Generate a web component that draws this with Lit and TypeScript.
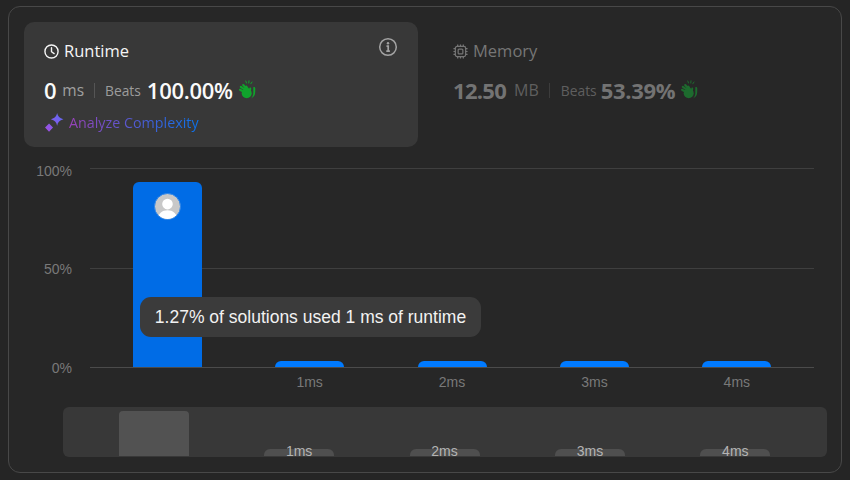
import { LitElement, html, css } from "lit";
import { customElement } from "lit/decorators.js";

const clap = html`<svg class="clap" viewBox="0 0 20 20" fill="none" stroke="currentColor" stroke-linecap="round">
  <path d="M10 13.500 3 9.800M10.500 11.500 3.800 6.800M11 10.500 6.200 5M11.500 10 9.300 6.600" stroke-width="2.100"/>
  <path d="M12.800 12.500 13.200 8.500" stroke-width="2"/>
  <circle cx="9.700" cy="13.300" r="5" fill="currentColor" stroke="none"/>
  <path fill="currentColor" stroke="none" d="M16.300 7.200c1.200-.7 2 .1 2 1.300l-.1 3.800c0 2.900-1.500 5-4.200 6.100 1.600-1.500 2.400-3.400 2.300-5.600Z"/>
  <path d="M8.800 1 9.500 3M12 .8 11.800 3M15 2 13.800 3.800" stroke-width="1"/>
</svg>`;

@customElement("app-root")
export class AppRoot extends LitElement {
  static styles = css`
    :host { display: block; width: 850px; height: 480px; box-sizing: border-box; padding: 6px 8px 7px; background: #252525; font-family: "Open Sans", "Liberation Sans", sans-serif; overflow: hidden; }
    * { box-sizing: border-box; }
    .frame { height: 467px; border: 1px solid #484848; border-radius: 12px; background: #272727; padding: 15px 14px 0 15px; }
    .top { display: flex; height: 125px; gap: 35px; }
    .stat { width: 394px; height: 125px; border-radius: 10px; padding: 17px 20px 0; position: relative; }
    .active { background: #383838; }
    .head { display: flex; align-items: center; gap: 5px; font-size: 16.500px; line-height: 24px; color: #f5f5f5; }
    .clock { width: 15px; height: 15px; }
    .info { position: absolute; top: 15px; right: 20px; width: 20px; height: 20px; color: #a3a3a3; }
    .vals { display: flex; align-items: center; margin-top: 11px; height: 32px; }
    .big { font-size: 22px; font-weight: 600; letter-spacing: -0.300px; color: #fafafa; }
    .big.tight { letter-spacing: -0.700px; }
    .unit { font-size: 15.500px; color: #a0a0a0; margin-left: 6px; }
    .sep { width: 1px; height: 15px; background: #555; margin: 0 10px; }
    .beats { font-size: 13.800px; color: #9c9c9c; margin-right: 6px; }
    .clap { width: 20px; height: 20px; color: #10a32c; margin-left: 4px; }
    .analyze { display: flex; align-items: center; gap: 4px; margin-top: 6px; margin-left: 0; }
    .spark { width: 21px; height: 21px; }
    .grad { font-size: 14.300px; line-height: 20px; background: linear-gradient(90deg, #9a42b8, #0a72ea); -webkit-background-clip: text; background-clip: text; color: transparent; }
    .dim { width: 300px; padding-left: 0; }
    .dim .head, .dim .big { color: #737373; }
    .dim .big { font-weight: 700; }
    .dim .unit, .dim .beats { color: #5f5f5f; }
    .dim .unit { margin-left: 8px; font-size: 16px; }
    .dim .sep { background: #3c3c3c; margin-right: 11px; }
    .dim .beats { margin-right: 4px; }
    .dim .clap { color: #1d6b2e; }
    .dim .head { color: #767676; }
    .chip { width: 15px; height: 15px; }
    .chart { display: flex; margin-top: 21px; position: relative; }
    .yaxis { height: 214px; display: flex; flex-direction: column; justify-content: space-between; text-align: right; font: 14px/17px "Liberation Sans", sans-serif; color: #797979; margin: -5.500px 18px 0 -15px; width: 63px; }
    .plotwrap { width: 724px; }
    .plot { height: 200px; position: relative; border-bottom: 1px solid #4b4b4b; border-top: 1px solid #3f3f3f; display: flex; align-items: flex-end; padding: 0 6px; }
    .mid { position: absolute; left: 0; right: 0; top: 99px; height: 1px; background: #3f3f3f; }
    .col { flex: 1; display: flex; justify-content: center; position: relative; }
    .bar { width: 69px; height: 6px; background: #007aff; border-radius: 6px 6px 0 0; position: relative; }
    .bar.tall { height: 185px; background: #006ce6; display: flex; justify-content: center; padding-top: 11px; }
    .avatar { width: 27px; height: 27px; border-radius: 50%; border: 1px solid #2a84ea; overflow: hidden; background: #c8c8c8; }
    .avatar svg { display: block; width: 100%; height: 100%; }
    .xaxis { display: flex; padding: 6px 6px 0; font: 14px/17px "Liberation Sans", sans-serif; color: #797979; }
    .xaxis span { flex: 1; text-align: center; }
    .tooltip { position: absolute; left: 116px; top: 129px; width: 341px; height: 40px; border-radius: 11px; background: #3b3b3b; color: #f2f2f2; font: 17.500px/40px "Liberation Sans", sans-serif; text-align: center; white-space: nowrap; }
    .mini { margin: 16px 0 0 39px; width: 764px; height: 50px; border-radius: 6px; background: #383838; display: flex; align-items: flex-end; padding: 0 19px 1px 18px; }
    .mcol { flex: 1; display: flex; justify-content: center; }
    .mbar { width: 70px; height: 7px; border-radius: 6px 6px 0 0; background: #4f4f4f; position: relative; display: flex; justify-content: center; }
    .mbar.tall { height: 45px; background: #525252; border-radius: 4px 4px 0 0; }
    .mlabel { position: absolute; top: -6px; font: 14px/17px "Liberation Sans", sans-serif; color: #b4b4b4; }
  `;

  render() {
    const small = ["1ms", "2ms", "3ms", "4ms"];
    return html`<div class="frame">
      <div class="top">
        <div class="stat active">
          <div class="head">
            <svg class="clock" viewBox="0 0 16 16" fill="none" stroke="currentColor" stroke-width="1.500" stroke-linecap="round" stroke-linejoin="round"><circle cx="8" cy="8" r="7"/><path d="M8 4v4.300l2.800 1.900"/></svg>
            Runtime
          </div>
          <svg class="info" viewBox="0 0 20 20" fill="none" stroke="currentColor"><circle cx="10" cy="10" r="8.300" stroke-width="1.500"/><path d="M8.500 9.200H10.200V14M8.300 14.200h3.600" stroke-width="1.700"/><circle cx="10" cy="6.300" r="1.200" fill="currentColor" stroke="none"/></svg>
          <div class="vals">
            <span class="big">0</span><span class="unit">ms</span><span class="sep"></span>
            <span class="beats">Beats</span><span class="big">100.00%</span>${clap}
          </div>
          <div class="analyze">
            <svg class="spark" viewBox="0 0 20 20"><defs><linearGradient id="g" x1="0" y1="1" x2="1" y2="0"><stop offset="0" stop-color="#a24ee0"/><stop offset="1" stop-color="#5a6cf5"/></linearGradient></defs><path fill="url(#g)" d="M12.500 1c.7 3.200 2.300 4.900 6 6-3.700 1.100-5.300 2.800-6 6-.7-3.200-2.300-4.900-6-6 3.700-1.100 5.300-2.800 6-6ZM4.800 11l3.800 3.800-3.800 3.900L1 14.800Z"/></svg>
            <span class="grad">Analyze Complexity</span>
          </div>
        </div>
        <div class="stat dim">
          <div class="head">
            <svg class="chip" viewBox="0 0 16 16" fill="none" stroke="currentColor" stroke-width="1.300"><rect x="2.500" y="2.500" width="11" height="11" rx="2"/><rect x="5.500" y="5.500" width="5" height="5" rx="1"/><path d="M5 .5v2M8 .5v2M11 .5v2M5 13.500v2M8 13.500v2M11 13.500v2M.5 5h2M.5 8h2M.5 11h2M13.500 5h2M13.500 8h2M13.500 11h2"/></svg>
            Memory
          </div>
          <div class="vals">
            <span class="big tight">12.50</span><span class="unit">MB</span><span class="sep"></span>
            <span class="beats">Beats</span><span class="big">53.39%</span>${clap}
          </div>
        </div>
      </div>
      <div class="chart">
        <div class="yaxis"><span>100%</span><span>50%</span><span>0%</span></div>
        <div class="plotwrap">
          <div class="plot">
            <div class="mid"></div>
            <div class="col"><div class="bar tall"><div class="avatar"><svg viewBox="0 0 26 26"><circle cx="13" cy="10.500" r="5.500" fill="#fff"/><path d="M3 26c.5-6 4.500-9 10-9s9.500 3 10 9Z" fill="#fff"/></svg></div></div></div>
            ${small.map(() => html`<div class="col"><div class="bar"></div></div>`)}
          </div>
          <div class="xaxis"><span></span>${small.map((s) => html`<span>${s}</span>`)}</div>
        </div>
        <div class="tooltip">1.27% of solutions used 1 ms of runtime</div>
      </div>
      <div class="mini">
        <div class="mcol"><div class="mbar tall"></div></div>
        ${small.map((s) => html`<div class="mcol"><div class="mbar"><span class="mlabel">${s}</span></div></div>`)}
      </div>
    </div>`;
  }
}
